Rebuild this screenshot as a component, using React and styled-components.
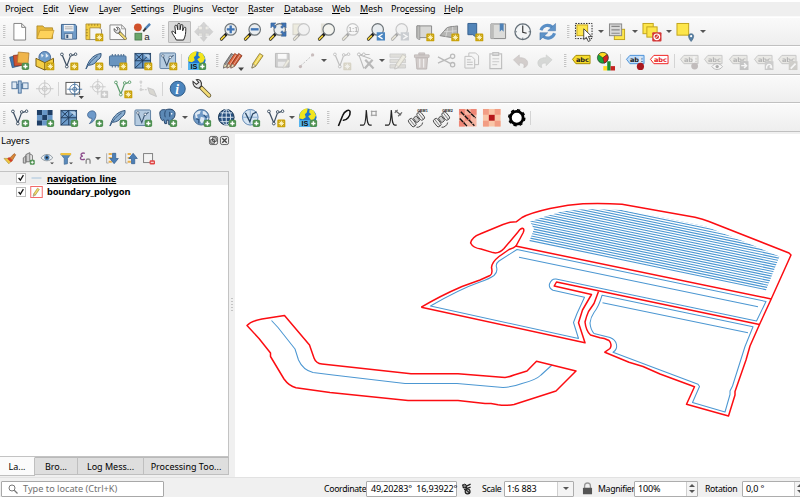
import React from "react";
import styled, { createGlobalStyle } from "styled-components";

const Global = createGlobalStyle`
  * { box-sizing: border-box; }
  body { margin: 0; overflow: hidden; background: #fff; }
`;

const Window = styled.div`
  width: 800px;
  height: 497px;
  padding-top: 2px;
  display: flex;
  flex-direction: column;
  overflow: hidden;
  background: #f0f0f0;
  font-family: "Noto Sans", "Open Sans", sans-serif;
  font-size: 9px;
  color: #000;
  box-shadow: inset 0 2px #fff;
`;

const MenuBar = styled.nav`
  display: flex;
  height: 15px;
  flex: none;
  padding-left: 5px;
  border-bottom: 1px solid #fafafa;
  background: #efefef;
`;

const MenuItem = styled.span`
  width: ${(p) => p.$w}px;
  flex: none;
  line-height: 14px;
  white-space: pre;
  letter-spacing: -0.14px;
  u { text-underline-offset: 1px; text-decoration-thickness: 0.7px; }
`;

const Toolbar = styled.div`
  display: flex;
  align-items: center;
  flex: none;
  height: ${(p) => p.$h}px;
  border-bottom: 1px solid #c0c0c0;
  border-top: 1px solid #fff;
  background: linear-gradient(#fafafa, #eeeeee);
`;

const GripCell = styled.span`
  width: ${(p) => (p.$first ? 7.75 : 12)}px;
  height: 13px;
  padding-right: 2px;
  display: flex;
  justify-content: flex-end;
  flex: none;
  &::before {
    content: "";
    width: 3px;
    background: repeating-linear-gradient(#c4c4c4 0 1px, #f6f6f6 1px 2px);
    border: 0 solid #f4f4f4;
    box-shadow: inset -1px 0 rgba(245, 245, 245, 0.6);
  }
`;

const ToolCell = styled.span`
  width: 24.55px;
  height: 24px;
  flex: none;
  display: flex;
  align-items: center;
  justify-content: center;
  opacity: ${(p) => (p.$off ? 0.36 : 1)};
  filter: ${(p) => (p.$off ? "grayscale(0.75)" : "none")};
`;

const Pressed = styled.span`
  width: 23px;
  height: 22px;
  display: flex;
  align-items: center;
  justify-content: center;
  background: #dadada;
  border: 1px solid #bababa;
  border-radius: 1px;
`;

const Divider = styled.span`
  width: 1px;
  height: 14px;
  margin: 0 2.5px 0 1.5px;
  flex: none;
  background: #d4d4d4;
`;

const ArrowCell = styled.span`
  width: ${(p) => p.$w || 10}px;
  display: flex;
  flex: none;
  justify-content: center;
  &::before {
    content: "";
    border: 3px solid transparent;
    border-top: 3px solid #555;
    border-bottom: 0;
  }
`;

/* ---------- icon building blocks ---------- */
const Plus = () => (
  <g>
    <rect x="12" y="12" width="7.6" height="7.6" rx="1.8" fill="#4f9152" />
    <path d="M15.8 13.6v4.4M13.6 15.8H18" stroke="#fff" strokeWidth="1.5" />
  </g>
);
const Star = () => (
  <g>
    <rect x="11.6" y="11.8" width="8.2" height="8" rx="1.2" fill="#c9a20a" />
    <path d="M15.7 13v5.6M13 15.8h5.4M13.8 13.9l3.8 3.8M17.6 13.9l-3.8 3.8" stroke="#fff6c8" strokeWidth="1" />
  </g>
);
const Lens = ({ fill = "#e9edf0" }) => (
  <g>
    <path d="M7.5 12.5 2.5 17.5" stroke="#222" strokeWidth="3.2" strokeLinecap="round" />
    <path d="M5.5 14.5 2.4 17.6" stroke="#f0cf3a" strokeWidth="1.8" strokeLinecap="round" />
    <circle cx="12" cy="7.6" r="5.9" fill={fill} stroke="#6d7478" strokeWidth="1.2" />
  </g>
);
const VShape = ({ c = "#3f5063" }) => (
  <g fill="#fff" stroke={c} strokeWidth="1">
    <path d="M3.5 4.5 8 15.5 11.8 5 17 3.2" fill="none" strokeWidth="1.3" />
    <circle cx="3" cy="3.5" r="1.4" /><circle cx="8" cy="16" r="1.4" />
    <circle cx="12" cy="4" r="1.3" /><circle cx="17" cy="3.3" r="1.3" />
  </g>
);
const Feather = () => (
  <g>
    <path d="M2 18.5C4 11 8 4 17.5 2.5c.5 4-2 6-4 7-1 3-5 5-9 5.2" fill="#8aaed0" stroke="#33567c" strokeWidth="1" />
    <path d="M2 18.5C5 13 9 8 14 5" fill="none" stroke="#33567c" strokeWidth=".9" />
  </g>
);
const Mesh = () => (
  <g>
    <rect x="2" y="2.5" width="16" height="15" fill="#6d9ccb" stroke="#2e4d70" />
    <path d="M2 10h16M10 2.5v15M10 2.5 2 10M2 2.5 10 10M18 2.5 10 10 2 17.5" stroke="#213c5b" strokeWidth="1" fill="none" />
    <path d="M11 3.5h6v5z" fill="#b7d0e8" />
  </g>
);
const VBox = () => (
  <g>
    <rect x="2" y="2" width="16" height="16" rx="1" fill="#b5cbe0" stroke="#5f80a2" />
    <path d="M5 5 9 15 12 7 16 4.5" fill="none" stroke="#37516e" strokeWidth="1.1" />
    <circle cx="5" cy="5" r="1.3" fill="#fff" stroke="#37516e" strokeWidth=".7" />
    <circle cx="12.5" cy="6.5" r="1.3" fill="#fff" stroke="#37516e" strokeWidth=".7" />
  </g>
);
const Earth = () => (
  <g>
    <circle cx="9.5" cy="9.5" r="8" fill="#6f99c6" stroke="#44688f" strokeWidth=".9" />
    <path d="M3 6c2-3 5-3.500 6-3l-1 3-3 1 1 3-2 1zM11 3c3 0 4 2 5 4l-3 1-2-2zM9 9l4 1-1 4-2 2-2-3zM15 10l2 0-1 3z" fill="#dfe9f3" />
    <path d="M4 11l3 1v4M12 7l3 3" stroke="#2c527e" strokeWidth="1.2" fill="none" />
  </g>
);
const IsGlobe = () => (
  <g>
    <circle cx="10" cy="9.5" r="9" fill="#1f75cf" />
    <path d="M2 6C4 1 8 0 10 .5l-1 4-2 2 1 3-3 2-4-1zM12 1l4 1.500 2.500 5-2 4-3 1-3-4 3-2-2-2z" fill="#f2e51d" />
    <path d="M1 12.500h18V19.500H1z" fill="#54b4ef" />
    <text x="3.500" y="18.900" fontSize="7.500" fontFamily="Liberation Sans" fontWeight="700" fill="#111">IS</text>
    <Plus />
  </g>
);
const Pencil = ({ c = "#f2d954", x = 0, line = "#84702c" }) => (
  <g transform={`translate(${x} 0)`}>
    <path d="M4 17.5 5 13 12 2.5 15.5 4.8 8 15.5z" fill={c} stroke={line} strokeWidth=".8" />
    <path d="M4 17.5 5 13 8 15.5z" fill="#efe3bd" stroke="#555" strokeWidth=".5" />
    <path d="M7 14 13.5 4" stroke="#fff" strokeOpacity=".6" strokeWidth=".8" />
  </g>
);
const Page = () => (
  <path d="M4 1.500h8l4 4v13H4zM12 1.500v4h4" fill="#fff" stroke="#777" strokeWidth=".9" />
);
const Tag = ({ fill = "#f7dc2e", line = "#a48a00", ink = "#222" }) => (
  <g>
    <path d="M1 8.500 4.500 4.500H19V13H4.500z" fill={fill} stroke={line} strokeWidth="1" strokeLinejoin="round" transform="translate(-.5 0)" />
    <text x="4" y="11.200" fontSize="6.600" fontFamily="DejaVu Sans" fontWeight="700" fill={ink} textLength="13.500" lengthAdjust="spacingAndGlyphs">abc</text>
  </g>
);
const Satellite = ({ n }) => (
  <g>
    <g stroke="#444" fill="#eee" strokeWidth=".9" transform="rotate(-38 9 12)">
      <rect x="1" y="7" width="5" height="9" rx="2" />
      <rect x="7" y="8.500" width="4" height="6" rx="1" fill="#ccc" />
      <rect x="12" y="7" width="5" height="9" rx="2" />
      <path d="M3.500 7v9M14.500 7v9" strokeWidth=".6" />
      <path d="M4 18c2 2 6 2 8 0" fill="none" />
    </g>
    <text x="9.500" y="4" fontSize="3.800" fontFamily="Liberation Sans" fontWeight="700" fill="#111">{n}</text>
  </g>
);
const MapSheet = () => (
  <g>
    <path d="M2 4h15v12H2z" fill="#d8d8d6" stroke="#8a8a8a" />
    <path d="M2 4h3v14c-2 0-3-1-3-2z" fill="#bcbcba" stroke="#8a8a8a" strokeWidth=".7" />
  </g>
);
const Crosshair = ({ c = "#999" }) => (
  <g fill="none" stroke={c} strokeWidth="1">
    <circle cx="10" cy="10" r="6" /><circle cx="10" cy="10" r="2.5" />
    <path d="M10 1v18M1 10h18" />
  </g>
);
const Sel = ({ x = 2, y = 3, s = 11 }) => (
  <rect x={x} y={y} width={s} height={s} fill="#fde64b" stroke="#c2a41c" strokeWidth="1" />
);
const Wrench = () => (
  <g>
    <path d="M9 8.500 17.500 17" stroke="#5d5332" strokeWidth="4.400" strokeLinecap="round" />
    <path d="M10 9.500 17.500 17" stroke="#f3dc76" strokeWidth="2.800" strokeLinecap="round" />
    <path d="M1 2.500 4.500 5.500 7 3.500 4.500 .8C8-.5 10.500 3 9.500 7L7 9.500C3.500 9.500 .5 6.500 1 2.500z" fill="#e8e8e8" stroke="#333" strokeWidth="1.100" />
  </g>
);
const ghostTag = { fill: "#ddd5ae", line: "#777", ink: "#444" };

const ICONS = {
  new: <Page />,
  open: <g><path d="M2 4h6l2 2h8v11H2z" fill="#e7b93b" stroke="#a98321" strokeWidth=".8" /><path d="M2 17 5 8.5h14.5L17 17z" fill="#fdd25a" stroke="#bc9128" strokeWidth=".7" /></g>,
  save: <g><path d="M2.5 2.5h14l1.500 1.500v13.500H2.500z" fill="#6f9bc8" stroke="#41648c" /><rect x="5" y="3" width="10" height="6.500" fill="#f4f5f7" /><path d="M6 5h8M6 7h8" stroke="#999" strokeWidth=".8" /><rect x="6" y="12" width="8" height="5.500" fill="#e1e6eb" stroke="#41648c" strokeWidth=".6" /><rect x="7.500" y="13" width="2" height="3.500" fill="#34557b" /></g>,
  layout: <g><path d="M5 5h10l3 3v10H5z" fill="#f4f4f4" stroke="#888" /><path d="M2 2h15v4H6v12H2z" fill="#f3cf42" stroke="#a9882a" strokeWidth=".8" /><path d="M5 2v2M8 2v2M11 2v2M14 2v2M2 8h2M2 11h2M2 14h2" stroke="#8d7121" strokeWidth=".7" /><Star /></g>,
  layouts: <g><path d="M2 3h12l4 4v11H2z" fill="#f9f9f9" stroke="#888" /><path d="M14 3v4h4" fill="none" stroke="#888" strokeWidth=".8" /><g transform="translate(5.500 5) scale(.7)"><Wrench /></g></g>,
  style: <g><circle cx="5" cy="5.5" r="4" fill="#d0512b" /><path d="M12.500 7 17.500 2" stroke="#4e7fb3" strokeWidth="2.600" /><path d="M10.500 9.500 13 6.500" stroke="#333" strokeWidth="2" /><rect x="2" y="11.5" width="7" height="7" fill="#6aa568" stroke="#46764a" strokeWidth=".8" /><text x="11.500" y="18.500" fontSize="10" fontFamily="Liberation Sans" fill="#222">a</text></g>,
  hand: <path d="M6.500 18.500C5 15 2 12 1.800 9.800c1.200-1 2.700.3 4 2.400L5 4.500C5 3 6.800 2.800 7.200 4.300L8 8V2.500C8 1 10.200 1 10.300 2.500V8l.8-4.500c.3-1.400 2.100-1.200 2.100.3L13 9l1.200-3c.5-1.300 2.300-.8 2 .6 0 5-.2 7.500-2.300 11.900z" fill="#fff" stroke="#222" strokeWidth="1" strokeLinejoin="round" />,
  pan: <g><rect x="4.5" y="4.5" width="10" height="9" fill="#eadf9a" stroke="#aaa" /><path d="M10 0l3.500 4h-2v4h4V6l4 4-4 4v-2.500h-4v4h2L10 20l-3.500-4h2v-4.500h-4V14l-4-4 4-4v2h4V4h-2z" fill="#999" stroke="#777" strokeWidth=".5" /></g>,
  zin: <g><Lens /><path d="M12 3.500v8M8 7.500h8" stroke="#3f74b5" strokeWidth="2.400" /></g>,
  zout: <g><Lens /><path d="M8 7.500h8" stroke="#3f74b5" strokeWidth="2.400" /></g>,
  zfull: <g><Lens /><path d="M3 1h5l-1.800 1.800 2.300 2.300-1.500 1.500-2.400-2.400L3 6zM18.500 1h-5l1.800 1.800L13 5.100l1.500 1.500 2.300-2.400L18.500 6zM18.500 14.500h-5l1.800-1.800L13 10.400l1.500-1.500 2.300 2.400 1.700-1.800z" fill="#3f74b5" stroke="#315c91" strokeWidth=".6" /></g>,
  zsel: <g><rect x="1" y="2" width="10" height="11" fill="#f2dd55" stroke="#a59340" /><Lens fill="#eee" /></g>,
  zlayer: <g><rect x="4" y="1.500" width="7" height="10" fill="#e3e1d8" /><Lens fill="#f3f3ee" /></g>,
  z11: <g><Lens fill="#fff" /><text x="7.500" y="10" fontSize="7" fontWeight="700" fontFamily="Liberation Sans" fill="#444">1:1</text></g>,
  zlast: <g><Lens /><rect x="11" y="10.500" width="8.500" height="8.500" fill="#4b86c0" /><path d="M17 12.300 13 14.800l4 2.500" stroke="#fff" strokeWidth="1.400" fill="none" /></g>,
  znext: <g><Lens /><rect x="11" y="10.500" width="8.500" height="8.500" fill="#6f93b8" /><path d="M13.500 12.300l4 2.500-4 2.500" stroke="#fff" strokeWidth="1.400" fill="none" /></g>,
  map: <g><MapSheet /><Star /></g>,
  map3d: <g><path d="M0 14 7 6c4-2 7-1 11-2v10l-6 2-6-1z" fill="#b5b5b3" stroke="#888" /><path d="M4 10l13-1M8 6l-2 9M13 5v9" stroke="#ddd" strokeWidth=".8" /><Star /></g>,
  bookmark: <g><path d="M4 1.500h9v14.500l-4-3-5 0z" fill="#5184b8" stroke="#37618f" /><Star /></g>,
  bookmarks: <g><path d="M2 2h15v15H2z" fill="#dcdcda" stroke="#8a8a8a" /><path d="M2 2h3v15H2z" fill="#bcbcba" /><path d="M11 1.500h4v8.500l-2-2-2 2z" fill="#4f82b7" /></g>,
  clock: <g fill="none" stroke="#66717a"><circle cx="10" cy="10" r="8" fill="#f3f5f6" strokeWidth="1.300" /><path d="M10 4v6.500l4 1" stroke="#333" strokeWidth="1.200" /><path d="M10 2.500v1.500M10 16v1.500M2.500 10H4M16 10h1.500" /></g>,
  refresh: <g fill="none" stroke="#5a8fc6" strokeWidth="3.200"><path d="M3 8.500C5 3 11 2 15 5.500M17 11.500C15 17 9 18 5 14.500" /><path d="M18 1.500v7.500h-8zM2 18.500v-7.500h8z" fill="#5f94c9" stroke="#3e6ea4" strokeWidth=".5" /></g>,
  select: <g><rect x="1.500" y="1.500" width="17" height="15.500" fill="none" stroke="#222" strokeDasharray="1.5 1.2" /><Sel x={3} y={3} s={11} /><path d="M10 7v11l2.700-2.300 2 4.300 2-1-2-4.200h3.500z" fill="#fff" stroke="#333" strokeWidth=".9" /></g>,
  selform: <g><Sel x={6.5} y={7.5} s={10.5} /><rect x="1.500" y="2" width="12.500" height="12" fill="#d8d8d8" stroke="#888" /><path d="M3.500 4.500h8.500M3.500 8h8.500M3.500 11.500h8.500" stroke="#888" strokeWidth="1.200" /></g>,
  desel: <g><Sel x={1} y={1.5} s={10.5} /><Sel x={5} y={5} s={10.500} /><rect x="10.500" y="10.500" width="9.500" height="9.500" rx="1" fill="#d33737" /><circle cx="15.200" cy="15.200" r="2.900" stroke="#fff" fill="none" strokeWidth="1.200" /><path d="M13.200 17.200l4-4" stroke="#fff" /></g>,
  selloc: <g><Sel x={1} y={1.5} s={12} /><path d="M15.500 20c-3.500-4-3.500-8 0-8s3.500 4 0 8z" fill="#557fa4" stroke="#3d5e7c" strokeWidth=".6" /><circle cx="15.500" cy="14.500" r="1.100" fill="#fff" /></g>,
  layers: <g strokeWidth=".7"><rect x="1" y="5" width="10" height="11" fill="#3f79b7" stroke="#2d547f" transform="rotate(-14 6 11)" /><rect x="4" y="4" width="11" height="11" fill="#d0532f" stroke="#8e351e" transform="rotate(-6 9 10)" /><rect x="8" y="1.500" width="11" height="11" fill="#f0b54b" stroke="#a7762a" transform="rotate(5 13 7)" /><Plus /></g>,
  geopackage: <g><circle cx="10" cy="6.500" r="6" fill="#6f9cc9" stroke="#46699a" /><path d="M6 3l3 1-2 3zM11 2l3 3-3 2z" fill="#e6eef6" /><path d="M1 7.500 10 12 19 7.500v8L10 19.500l-9-4z" fill="#f5cf47" stroke="#7a5f12" /><path d="M10 12V19.500" stroke="#7a5f12" /><Star /></g>,
  newshape: <g><VShape /><Star /></g>,
  newfeather: <g><Feather /><Star /></g>,
  chip: <g><path d="M4.500 3v14M7.500 3v14M10.500 3v14M13.500 3v14M16 3v14" stroke="#66819d" strokeWidth="1.300" /><rect x="1.500" y="5" width="17" height="10" rx="1" fill="#6994bf" stroke="#476f98" /><Star /></g>,
  newmesh: <g><Mesh /><Star /></g>,
  newvbox: <g><VBox /><Star /></g>,
  is: <IsGlobe />,
  edits: <g><Pencil c="#8d8d8d" line="#555" x={-4.5} /><Pencil c="#e2683f" line="#923a1d" x={-1} /><Pencil c="#d05a35" line="#7e3018" x={3} /><path d="M14.500 17h6l-3 3.500z" fill="#444" /></g>,
  pencil: <Pencil />,
  savee: <g><path d="M2.500 2.500h14v14h-14z" fill="#8c8c8c" stroke="#555" /><rect x="5" y="3" width="9" height="5" fill="#fff" /><rect x="5" y="11" width="8" height="5" fill="#ddd" /><g transform="translate(8 7) scale(.6)"><Pencil /></g></g>,
  digit: <g><path d="M4 15 15 5" stroke="#666" strokeDasharray="2 1.5" /><circle cx="3.500" cy="16" r="1.700" fill="#c44" /><circle cx="16" cy="4" r="1.700" fill="#c44" /></g>,
  vedit: <g><VShape c="#666" /><Star /></g>,
  vtool: <g fill="none" stroke="#555"><path d="M2 3.500h12M3 4l5 14M4 4l11 4" strokeWidth="1.100" /><circle cx="3" cy="3.500" r="1.500" fill="#fff" /><circle cx="8" cy="3.500" r="1.500" fill="#fff" /><path d="M9 18 17 9M9.500 9l8.500 9" strokeWidth="2.300" /></g>,
  multi: <g><path d="M2 3h16v3.500H2zM2 8.500h16V12H2zM2 14h16v3.500H2z" fill="#c3b98d" stroke="#777" strokeWidth=".7" /><g transform="translate(3 1)"><Pencil /></g></g>,
  trash: <g fill="#c47d6e" stroke="#86483d"><path d="M4 7h12l-1 11.500H5zM2.500 4h15v2.500h-15zM7 2h6v2H7z" /><path d="M8 8v9M12 8v9" stroke="#fff" /></g>,
  cut: <g fill="none" stroke="#555" strokeWidth="1.300"><path d="M1 6l13 7M1 12.500l13-6" /><circle cx="16" cy="5.500" r="2.200" /><circle cx="16" cy="14" r="2.200" /></g>,
  copy: <g fill="#f6f6f6" stroke="#666"><path d="M7 2h7l3 3v9H7z" /><path d="M3 5.500h7l3 3v9H3z" /><path d="M5 9h4M5 11.500h6M5 14h6" /></g>,
  paste: <g fill="#f4f1e9" stroke="#666" strokeWidth="1.200"><path d="M4 3h12v15H4z" /><path d="M7 1.500h6v3H7z" fill="#aaa" /><path d="M6.500 8h7M6.500 11h7M6.500 14h5" strokeWidth=".8" /></g>,
  undo: <path d="M2.500 9 8.500 4v3c5-.5 9 2 8.500 6-.4 2.500-2 3.500-4 4 1.500-3.500-1-5-4.500-4.500V15z" fill="#bf8375" stroke="#8c665c" strokeWidth=".7" />,
  redo: <path d="M17.500 9 11.500 4v3c-5-.5-9 2-8.500 6 .4 2.500 2 3.500 4 4-1.500-3.500 1-5 4.500-4.500V15z" fill="#9bac9b" stroke="#78907a" strokeWidth=".7" />,
  label: <Tag />,
  diagram: <g><circle cx="7" cy="7" r="5.600" fill="#1ba43b" stroke="#222" strokeWidth=".6" /><path d="M7 7 2.500 3.500A6 6 0 0 1 11.500 3.500z" fill="#ffdb20" stroke="#222" strokeWidth=".4" /><path d="M7 7 11.500 3.500a6 6 0 0 1-3 9z" fill="#d42320" stroke="#222" strokeWidth=".4" /><path d="M7.500 15.500h4v4.500h-4z" fill="#ffdb20" /><path d="M11.500 10.500h3.500V20h-3.500z" fill="#178f35" /><path d="M15 15.500h4.500v4.500H15z" fill="#c62421" /></g>,
  labelpin: <g><Tag fill="#bfdcfa" line="#4b91d7" /><path d="M14.500 5.500v8" stroke="#dfe6ec" strokeWidth="2.600" /><circle cx="14.800" cy="15.800" r="3.700" fill="#a9181f" /></g>,
  labelred: <Tag fill="#fff" line="#f02020" ink="#e62020" />,
  lpin: <g><Tag {...ghostTag} /><path d="M14.500 5.500v8" stroke="#eee" strokeWidth="2.600" /><circle cx="15" cy="15.500" r="3.500" fill="#8c5858" /></g>,
  leye: <g><Tag {...ghostTag} /><path d="M8 16c3-4 8-4 11 0-3 4-8 4-11 0z" fill="#fff" stroke="#555" /><circle cx="13.500" cy="16" r="1.700" fill="#333" /></g>,
  lmove: <g><Tag {...ghostTag} /><rect x="11" y="10.500" width="9" height="9" fill="#777" /><path d="M12.500 15h5M15.500 12.500l2.500 2.500-2.500 2.500" stroke="#fff" strokeWidth="1.500" fill="none" /></g>,
  lrot: <g><Tag {...ghostTag} /><rect x="11" y="10.500" width="9" height="9" fill="#888" /><path d="M13 18c-1-5 5-6 5-1l-2-1" stroke="#fff" strokeWidth="1.500" fill="none" /></g>,
  ledit: <g><Tag {...ghostTag} /><rect x="11" y="10.500" width="9" height="9" fill="#998f66" /><path d="M13 18l5-5" stroke="#fff" strokeWidth="1.800" /></g>,
  dock: <g strokeWidth=".9"><path d="M3 5.500h14v4H3z" fill="#8aa9ca" stroke="#486e98" /><rect x="2" y="3" width="5" height="7" fill="#dfe9f3" stroke="#486e98" /><rect x="8.500" y="2" width="3" height="12.500" fill="#a9c5e2" stroke="#486e98" /><rect x="13" y="4" width="5.500" height="6" fill="#dfe9f3" stroke="#486e98" /></g>,
  cross: <Crosshair c="#777" />,
  crossbox: <g><rect x="2" y="3.500" width="14" height="12" fill="#fff" stroke="#555" /><g transform="translate(2.500 2) scale(.85)"><Crosshair c="#3f6d9b" /></g><path d="M15 17.500h5.500l-2.700 3z" fill="#444" /></g>,
  crossplus: <g><g transform="translate(0 -1) scale(.9)"><Crosshair c="#777" /></g><rect x="12" y="12" width="7.6" height="7.6" rx="1" fill="#888" /><path d="M15.8 13.6v4.4M13.6 15.8H18" stroke="#fff" strokeWidth="1.5" /></g>,
  vgreen: <g><VShape c="#5d9c6d" /><Star /></g>,
  trace: <g><path d="M3 3v8h7" stroke="#777" fill="none" strokeDasharray="2 1" /><circle cx="3" cy="3" r="1.5" fill="#999" /><circle cx="3" cy="11" r="1.5" fill="#999" /><path d="M10 9l2 6 7 3-3-7z" fill="#b9a768" stroke="#777" /></g>,
  info: <g><circle cx="10" cy="10" r="7.700" fill="#4a84bd" stroke="#2e5985" /><text x="7.500" y="15" fontSize="14" fontFamily="Liberation Serif" fontStyle="italic" fontWeight="700" fill="#fff">i</text></g>,
  wrench: <Wrench />,
  addv: <g><VShape /><Plus /></g>,
  addraster: <g><path d="M2 2h5.300v5.300H2zM12.600 2H18v5.300h-5.400zM7.300 7.300h5.300v5.300H7.300zM2 12.600h5.300V18H2z" fill="#1f3f66" /><path d="M7.300 2h5.300v5.300H7.300zM2 7.300h5.300v5.300H2zM12.600 7.300H18v5.300h-5.400zM7.300 12.600h5.300V18H7.300z" fill="#6897c8" /><Plus /></g>,
  addmesh: <g><Mesh /><Plus /></g>,
  comma: <g><path d="M6 3.500C10.500 1.500 13 5 12 9c-1 4-3.500 6-6.500 7 2-2 3-4 2.500-5.500C3.500 11 2 5.500 6 3.500z" fill="#6e9aca" stroke="#385d88" strokeWidth=".8" /><Plus /></g>,
  addfeather: <g><Feather /><Plus /></g>,
  addvbox: <g><VBox /><Plus /></g>,
  elephant: <g><path d="M2 7C1 2 5 1 8 2c4-2 10-.5 9.500 4.500-.3 2.500-1 4.500-3 5V17h-3.500v-4.500H9V16H7l-1-4-1.500 1C3 12 2.300 9 2 7z" fill="#5c89b6" stroke="#254469" strokeWidth="1" /><path d="M7.500 3c-1 3-.5 5 0 6.500M12 4v5" fill="none" stroke="#254469" strokeWidth=".9" /><circle cx="14" cy="6" r=".8" fill="#fff" /><Plus /></g>,
  wms: <g><Earth /><Plus /></g>,
  wcs: <g><circle cx="9.500" cy="9.500" r="8" fill="#27507f" stroke="#16324f" /><path d="M2 9.500h15M9.500 1.500v16M3.500 5h12M3.500 14h12" stroke="#d9e5f1" strokeWidth="1" /><ellipse cx="9.500" cy="9.500" rx="4.500" ry="8" fill="none" stroke="#d9e5f1" /><Plus /></g>,
  wfs: <g><circle cx="9.500" cy="9.500" r="8" fill="#d6e5f3" stroke="#5e86b2" /><path d="M2 9.500h15M9.500 1.500v16" stroke="#8aaed2" /><path d="M4.500 5 9 14l3-8 4-2" fill="none" stroke="#2a4867" strokeWidth="1.300" /><Plus /></g>,
  rho: <path d="M3.500 18.500 8 7.500C9.500 3 15 .5 15.500 4 16 8 12 13 8 12.500" fill="none" stroke="#111" strokeWidth="1.600" />,
  peak1: <g fill="none"><path d="M1 17.500h3.500C7 17.500 7 9 7.500 2c1 8 .5 15.500 3.500 15.500h2" stroke="#222" strokeWidth="1.200" /><path d="M13 3.500h4.500v4H13zM12 3.500h6.500M12 7.500h6.500M13 2.500v6M17.500 2.500v6" stroke="#999" strokeWidth=".7" /></g>,
  peak2: <g fill="none"><path d="M1 17.500h3.500C7 17.500 7 9 7.500 2c1 8 .5 15.500 3.500 15.500h2" stroke="#222" strokeWidth="1.200" /><path d="M11.500 2.500l6 5M11 5l3-3M14.500 8.500l4-4" stroke="#666" strokeWidth="1.200" /></g>,
  sat1: <Satellite n="GEM1" />,
  sat2: <Satellite n="GEM2" />,
  hatch: <g><rect x="1" y="1" width="18" height="18" fill="#f7b5a2" /><path d="M1 1h6v6H1zM13 1h6v6h-6zM7 7h6v6H7zM1 13h6v6H1z" fill="#ee8676" /><path d="M2 5 18 17M8 2l10 7M2 12l9 7" stroke="#111" strokeWidth="1.400" strokeDasharray="5 .8" transform="rotate(9 10 10)" /></g>,
  grid: <g><rect x="1" y="1" width="18" height="18" fill="#f9c6a8" /><path d="M1 1h6v6H1zM13 1h6v6h-6zM1 13h6v6H1zM13 13h6v6h-6z" fill="#f29d84" /><rect x="7" y="7" width="6" height="6" fill="#b5171a" /></g>,
  ring: <g><circle cx="10" cy="10" r="6.500" fill="#fff" stroke="#000" strokeWidth="2.800" /><circle cx="10" cy="10" r="8.200" fill="none" stroke="#000" strokeWidth="1.600" strokeDasharray="3.3 3.14" /></g>,
};

const Icon = styled.svg.attrs({ viewBox: "0 0 20 20" })`
  width: ${(p) => p.$s || 19.5}px;
  height: ${(p) => p.$s || 19.5}px;
  overflow: visible;
  flex: none;
`;

/* "|" grip, "/" divider, "v" arrow, a leading "-" marks a disabled tool, "*" a pressed one */
function Tools({ items }) {
  return items.split(" ").map((t, i) => {
    if (t === "|") return <GripCell key={i} $first={i === 0} />;
    if (t === "/") return <Divider key={i} />;
    if (t[0] === "v" && !isNaN(t.slice(1))) return <ArrowCell key={i} $w={Number(t.slice(1))} />;
    const off = t[0] === "-";
    const on = t[0] === "*";
    const svg = <Icon>{ICONS[t.replace(/^[-*]/, "")]}</Icon>;
    return <ToolCell key={i} $off={off}>{on ? <Pressed>{svg}</Pressed> : svg}</ToolCell>;
  });
}

const Body = styled.main`
  display: flex;
  flex: none;
  height: 345px;
`;
const Side = styled.aside`
  width: 229px;
  flex: none;
  display: flex;
  flex-direction: column;
`;
const Splitter = styled.div`
  width: 6px;
  flex: none;
  display: flex;
  align-items: center;
  justify-content: center;
  &::before {
    content: "";
    width: 2px;
    height: 14px;
    background: repeating-linear-gradient(#c4c4c4 0 1px, #f0f0f0 1px 3px);
  }
`;
const PanelTitle = styled.div`
  height: 18px;
  display: flex;
  align-items: center;
  padding: 0 0 2px 1px;
  gap: 2px;
  font-size: 9.5px;
  span { flex: 1; letter-spacing: -0.1px; }
`;
const PanelTools = styled.div`
  height: 20.5px;
  display: flex;
  align-items: center;
  padding: 0 0 3px 0.5px;
`;
const PanelTool = styled.span`
  width: ${(p) => p.$w || 18.8}px;
  flex: none;
  display: flex;
  justify-content: center;
`;
const Tree = styled.div`
  flex: 1;
  background: #fff;
  border: 1px solid #c3c3c3;
  border-left: 0;
`;
const TreeRow = styled.div`
  height: 13.5px;
  display: flex;
  align-items: center;
  padding-left: 16px;
  background: ${(p) => (p.$selected ? "#efefef" : "transparent")};
  font-weight: 700;
  font-size: 9.3px;
  span { text-decoration: ${(p) => (p.$selected ? "underline" : "none")}; text-underline-offset: 1px; white-space: nowrap; letter-spacing: ${(p) => (p.$selected ? "-0.1px" : "-0.17px")}; }
`;
const Check = styled.svg.attrs({ viewBox: "0 0 10 10" })`
  width: 10px;
  height: 10px;
  background: #fff;
  border: 1px solid #bdbdbd;
  margin-right: 4px;
`;
const Symbol = styled.svg.attrs({ viewBox: "0 0 13 12" })`
  width: 13px;
  height: 12px;
  margin-right: 4px;
`;
const Tabs = styled.div`
  height: 20px;
  display: flex;
`;
const Tab = styled.div`
  width: ${(p) => p.$w}px;
  height: ${(p) => (p.$on ? 19 : 18)}px;
  line-height: 18px;
  text-align: center;
  background: ${(p) => (p.$on ? "#fbfbfb" : "#dedede")};
  border: 1px solid #bfbfbf;
  border-top: ${(p) => (p.$on ? "1px solid #fbfbfb" : "1px solid #b9b9b9")};
  border-left: 0;
  white-space: nowrap;
`;
const MapCanvas = styled.svg.attrs({ viewBox: "235 134 565 343" })`
  width: 565px;
  height: 343px;
  flex: none;
  margin-top: 2px;
  background: #fff;
  stroke-linejoin: round;
  fill: none;
`;

const Status = styled.footer`
  flex: 1;
  display: flex;
  align-items: center;
  padding: 2px 0 0 1px;
  border-top: 1px solid #e2e2e2;
  > * { flex: none; }
`;
const Search = styled.div`
  width: 163px;
  height: 16px;
  border: 1px solid #a8a8a8;
  border-radius: 1px;
  background: #fff;
  color: #707070;
  display: flex;
  align-items: center;
  padding-left: 6px;
  gap: 5px;
  font-size: 9.2px;
`;
const StatusLabel = styled.span`
  margin-left: ${(p) => p.$ml}px;
  width: ${(p) => p.$w}px;
  white-space: nowrap;
  font-size: 8.7px;
  letter-spacing: -0.3px;
`;
const Field = styled.div`
  width: ${(p) => p.$w}px;
  height: 16px;
  display: flex;
  align-items: center;
  justify-content: space-between;
  padding-left: ${(p) => p.$pl || 2}px;
  background: #fff;
  border: 1px solid #adadad;
  border-radius: 1px;
  white-space: pre;
  letter-spacing: -0.15px;
`;
const Button = styled.div`
  width: ${(p) => p.$w}px;
  height: 14px;
  display: flex;
  flex-direction: column;
  gap: 3px;
  align-items: center;
  justify-content: center;
  background: #f4f4f4;
  border-left: 1px solid #cfcfcf;
`;
const Up = styled.i`
  border: 3px solid transparent;
  border-bottom: 3px solid #555;
  border-top: 0;
`;
const Down = styled.i`
  border: 3px solid transparent;
  border-top: 3px solid #555;
  border-bottom: 0;
`;
const StatusIcon = styled.span`
  display: flex;
  justify-content: center;
  width: ${(p) => p.$w}px;
`;

const MENU = [
  ["j", "Pro", "ect", 38], ["E", "", "dit", 26], ["V", "", "iew", 30], ["L", "", "ayer", 32],
  ["S", "", "ettings", 42], ["P", "", "lugins", 39], ["o", "Vect", "r", 36], ["R", "", "aster", 36],
  ["D", "", "atabase", 48], ["W", "", "eb", 28], ["M", "", "esh", 31], ["c", "Pro", "essing", 53], ["H", "", "elp", 30],
];

const HATCH = Array.from({ length: 34 }, (_, i) => `M520 ${(238.5 - i * 2.45).toFixed(2)}L790 ${(238.5 - i * 2.45 + 56.2).toFixed(2)}`).join("");

function FieldMap() {
  return (
    <MapCanvas>
      <defs>
        <clipPath id="hatch">
          <path d="M530 221.500 545 216.500 562 211.500 585 209 622 210 665 218 706 226.500 745 242 779.500 256.500 765.500 291.500 529 242 534 229z" />
        </clipPath>
      </defs>
      <g stroke="#4c97d2" strokeWidth="1.05">
        <path clipPath="url(#hatch)" d={HATCH} strokeWidth="1.1" />
        <path d="M430.500 306 578.500 338.500 573.500 322.500 577 313.500 584.500 297.200 553 290.200Q548.500 288 549.500 284 551.500 278.500 556 279L756.500 321 766 301.500 517 249.500 499 261Q495.500 263.500 496.500 267 498 272 494 275.500 489 279 480 282 460 289 430.500 306zM519 257.300 758 306.700" />
        <path d="M602 295.300 753 326.700 745 346.500 732.500 386 730 391V394.500L725 412 692.500 402.500 699.500 386.500 698 384.300 613 352.200Q617.500 349.500 616.500 344.500 615.500 339.500 610 337.500L594 333.500Q590.500 329.500 590 323 590.500 317.500 594 312.500 599 306 602 295.300zM602.500 302.700 748 332.700" />
        <path d="M271.500 320.500 278 327.500 295 349 298.500 360Q303 370 313 372.500L333 375 405 383.500H457L503 387.400Q513 387 522 383.500 536 380 541 375L552 365" />
      </g>
      <g stroke="#fc0d12" strokeWidth="1.5">
        <path d="M421.300 307.200Q440 296 462 286.500L480 280 490 275.500Q493 274 491.500 267.500 492 262 499 256.500L509 249.500Q514 248 516 246L523 233Q525 229 522.500 228.300 520 228.500 518 232L504 248.500Q499 254 493 252.600L481 249Q473 248 470.600 243 472 237 480 234L503 224.500 510 222.300 516.500 221.700 522 217.500Q530 213 550 208.500L568 205.200 583 203.700Q603 203 622 204.200L695 217.300Q703 219 709 221.500L789 253 791 255 771.200 299 759.500 324.500 750 346 746 360 735 391.500V395L728.500 416 686.500 404.200 694.500 386.700 660 374 643 366.500 629 362.300 604.800 352.200 610 348.500Q612.500 344 609 340.500 604 338 600 337.800L590.500 335Q586 331 585 322 586.500 316 588.500 311.500L594 303.500 598.500 291.500" />
        <path d="M515.500 246 771.200 299M759.500 324.500 556.500 282 554.200 286 591.500 294.500 582.500 310 578.500 322.700 585 342.800 421.300 307.200" />
        <path d="M247 325.500Q251 321 262 319L284.500 315.400 309.500 345 314 358Q316 363.500 322 364L411 373.800H458L505 377.400Q509 377 514 375L527 371 536.500 361.300 576 371 559 388 556 391 514 404.500Q506 406 498 404.800L491 403.500H485L458 400.500H408L330 392.500 296 387.700Q289 386 284 379L270.500 356.500V353L259 338.500z" />
      </g>
    </MapCanvas>
  );
}

export default function App() {
  return (
    <Window>
      <Global />
      <MenuBar>
        {MENU.map(([key, pre, post, w]) => (
          <MenuItem key={pre + key + post} $w={w}>{pre}<u>{key}</u>{post}</MenuItem>
        ))}
      </MenuBar>
      <Toolbar $h={29}><Tools items="| new open save layout layouts style | *hand -pan zin zout zfull -zsel zlayer -z11 zlast -znext map map3d bookmark bookmarks clock refresh | select v9.5 selform v9.5 desel v9.5 selloc v9.5" /></Toolbar>
      <Toolbar $h={29}><Tools items="| layers geopackage newshape newfeather chip newmesh newvbox / is | edits pencil -savee -digit v10 -vedit -vtool v7 -multi -trash -cut -copy -paste -undo -redo | label diagram / labelpin labelred / -lpin -leye -lmove -lrot -ledit" /></Toolbar>
      <Toolbar $h={28}><Tools items="| dock -cross / crossbox -crossplus vgreen -trace / info wrench" /></Toolbar>
      <Toolbar $h={29}><Tools items="| addv addraster addmesh comma addfeather addvbox elephant v10 wms wcs wfs newshape v8 is | rho peak1 peak2 sat1 sat2 hatch grid ring /" /></Toolbar>
      <Body>
        <Side>
          <PanelTitle>
            <span>Layers</span>
            <Icon $s={9}><rect x="1" y="1" width="18" height="18" rx="4" fill="none" stroke="#555" strokeWidth="2" /><path d="M8 4h8v8H8zM4 8h8v8H4z" fill="none" stroke="#444" strokeWidth="2" /></Icon>
            <Icon $s={9}><rect x="1" y="1" width="18" height="18" rx="4" fill="none" stroke="#555" strokeWidth="2" /><path d="M5 5l10 10M15 5 5 15" stroke="#444" strokeWidth="3" /></Icon>
          </PanelTitle>
          <PanelTools>
            <PanelTool><Icon $s={12}><path d="M9 9 17 1l2.500 2-6 10z" fill="#d98636" stroke="#914d19" /><path d="M0 9l7 0 5 5-4 4z" fill="#f0c943" stroke="#a68a2e" /><path d="M7 8l6 6" stroke="#d04128" strokeWidth="4" /></Icon></PanelTool>
            <PanelTool><Icon $s={13}><path d="M2 17V9l4-3v11zM6 15V4l6-3v14z" fill="#ccc" stroke="#777" strokeWidth="1.5" /><path d="M12 3l4 2v8" fill="none" stroke="#777" strokeWidth="1.500" /><Plus /></Icon></PanelTool>
            <PanelTool><Icon $s={13}><path d="M0 9C5 2 14 2 18 9 13 15 5 15 0 9z" fill="#e9eef2" stroke="#8a949c" strokeWidth="1.5" /><circle cx="9" cy="8.500" r="4" fill="#4a7db0" /><circle cx="9" cy="8.500" r="1.700" fill="#222" /><path d="M14 16h6l-3 3z" fill="#444" /></Icon></PanelTool>
            <PanelTool><Icon $s={13}><path d="M1 3h16l-5.500 7v8l-5 1v-9z" fill="#5a8abc" stroke="#3d668f" /><path d="M1 1.500h16v3.500H1z" fill="#efc13d" /><path d="M14 16h6l-3 3z" fill="#444" /></Icon></PanelTool>
            <PanelTool><Icon $s={13}><path d="M9 2C3 0 1 6 6 6.500 0 7 1 14 9 11" fill="none" stroke="#8c4d8c" strokeWidth="2" /><path d="M11 18v-5c0-3 6-3 6 0v5" fill="none" stroke="#888" strokeWidth="2" /></Icon></PanelTool>
            <PanelTool $w={8}><Down /></PanelTool>
            <PanelTool $w={20}><Icon $s={13}><path d="M4 3h5M4 9h5M4 15h5" stroke="#e8b04d" strokeWidth="3" /><path d="M1 2v15h3" stroke="#888" fill="none" /><path d="M10 2h5v8h4l-6.500 8L6 10h4z" fill="#4c7fb6" stroke="#2c5688" /></Icon></PanelTool>
            <PanelTool $w={18}><Icon $s={13}><path d="M4 3h5M4 9h5M4 15h5" stroke="#e8b04d" strokeWidth="3" /><path d="M1 2v15h3" stroke="#888" fill="none" /><path d="M10 18h5v-8h4l-6.500-8L6 10h4z" fill="#4c7fb6" stroke="#2c5688" /></Icon></PanelTool>
            <PanelTool $w={18}><Icon $s={12}><rect x="1" y="1" width="15" height="15" fill="#f3f3f3" stroke="#777" strokeWidth="1.5" /><rect x="11" y="12" width="9" height="7" rx="2" fill="#e04646" /><path d="M13 15.500h5" stroke="#fff" strokeWidth="1.5" /></Icon></PanelTool>
          </PanelTools>
          <Tree>
            <TreeRow $selected>
              <Check><path d="M2 5l2.200 2.600L8 1.500" fill="none" stroke="#111" strokeWidth="1.6" /></Check>
              <Symbol><path d="M1.500 6h10" stroke="#a6c3dc" /></Symbol>
              <span>navigation_line</span>
            </TreeRow>
            <TreeRow>
              <Check><path d="M2 5l2.200 2.600L8 1.500" fill="none" stroke="#111" strokeWidth="1.6" /></Check>
              <Symbol><rect x=".75" y=".5" width="11.5" height="11" fill="#fff" stroke="#f26a6a" /><g transform="translate(1 .8) scale(.54)"><Pencil c="#e8d04c" /></g></Symbol>
              <span>boundary_polygon</span>
            </TreeRow>
          </Tree>
          <Tabs>
            <Tab $on $w={35}>La...</Tab>
            <Tab $w={43}>Bro...</Tab>
            <Tab $w={66}>Log Mess...</Tab>
            <Tab $w={85}>Processing Too...</Tab>
          </Tabs>
        </Side>
        <Splitter />
        <FieldMap />
      </Body>
      <Status>
        <Search>
          <Icon $s={10}><circle cx="8" cy="8" r="6" fill="none" stroke="#777" strokeWidth="2" /><path d="M12.500 12.500 19 19" stroke="#777" strokeWidth="2.4" /></Icon>
          Type to locate (Ctrl+K)
        </Search>
        <StatusLabel $ml={160} $w={42}>Coordinate</StatusLabel>
        <Field $w={91} $pl={4}>49,20283°  16,93922°</Field>
        <StatusIcon $w={19}><Icon $s={12}><path d="M2 3l8 5M3 8l13-6M5 11l11-4" stroke="#222" strokeWidth="2.2" /><circle cx="6" cy="5" r="3" fill="#888" stroke="#111" strokeWidth="1.5" /><circle cx="11" cy="14" r="4" fill="#bbb" stroke="#222" strokeWidth="2" /><path d="M8 11l7 6" stroke="#222" strokeWidth="2" /></Icon></StatusIcon>
        <StatusLabel $ml={6} $w={22}>Scale</StatusLabel>
        <Field $w={70}>1:6 883<Button $w={16}><Down /></Button></Field>
        <StatusIcon $w={26}><Icon $s={13}><path d="M5.500 10V6c0-6 9-6 9 0v4" fill="none" stroke="#999" strokeWidth="2" /><rect x="3" y="9" width="14" height="10" rx="1" fill="#555" /></Icon></StatusIcon>
        <StatusLabel $ml={-2} $w={36}>Magnifier</StatusLabel>
        <Field $w={64} $pl={3}>100%<Button $w={11}><Up /><Down /></Button></Field>
        <StatusLabel $ml={7} $w={37}>Rotation</StatusLabel>
        <Field $w={64} $pl={3}>0,0 °<Button $w={11}><Up /><Down /></Button></Field>
      </Status>
    </Window>
  );
}
